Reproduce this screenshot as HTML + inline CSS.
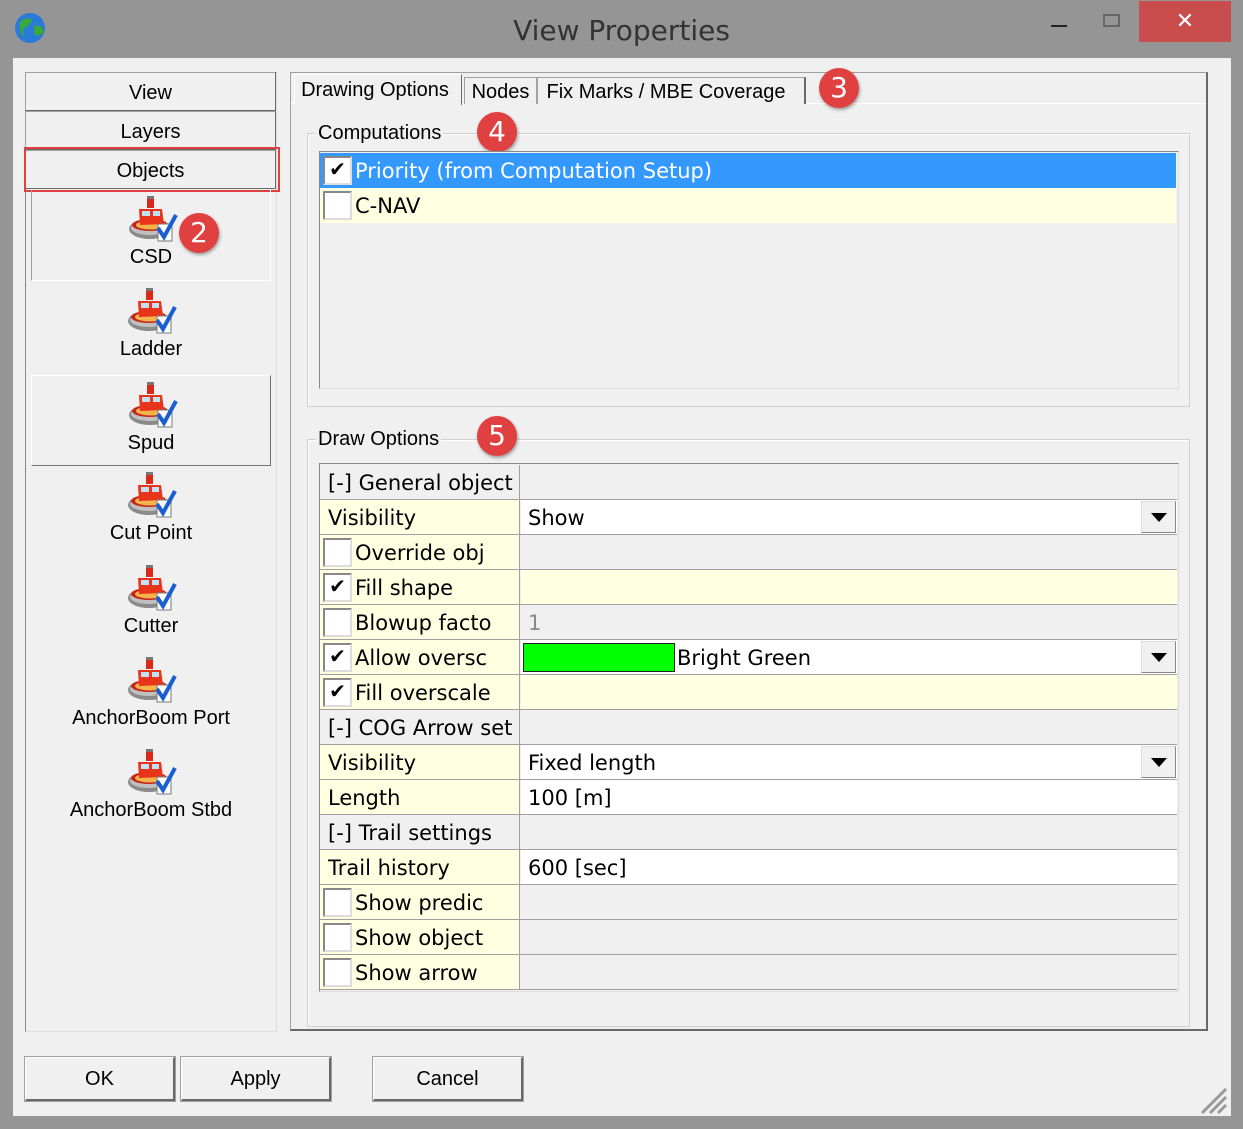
<!DOCTYPE html>
<html><head><meta charset="utf-8"><style>
*{margin:0;padding:0;box-sizing:border-box}
body{width:1243px;height:1129px;background:#959595;position:relative;overflow:hidden;font-family:"Liberation Sans",sans-serif;color:#000}
.a{position:absolute}
.client{left:13px;top:58px;width:1218px;height:1058px;background:#f0f0f0}
.badge{position:absolute;width:40px;height:40px;border-radius:50%;background:#e04040;color:#fff;font-size:28px;text-align:center;line-height:40px;box-shadow:1px 2px 3px rgba(0,0,0,.35);font-family:"DejaVu Sans",sans-serif}
.nbtn{position:absolute;left:25px;width:251px;height:39px;border:1px solid #a0a0a0;border-bottom-color:#696969;border-right-color:#696969;background:#f0f0f0;text-align:center;font-size:20px;line-height:40px}
.item{position:absolute;left:31px;width:240px;height:91px;text-align:center;font-size:20px}
.item svg{position:absolute;left:96px;top:5px}
.item span{position:absolute;left:0;right:0;top:56px}
.grp{position:absolute;border:1px solid #d0d0d0;box-shadow:inset 1px 1px 0 #fff}
.glab{position:absolute;background:#f0f0f0;font-size:20px;padding:0 2px}
.g{font-family:"DejaVu Sans",sans-serif;font-size:21px}
.row{position:absolute;left:320px;width:857px;height:35px;border-bottom:1px solid #a0a0a0}
.row .l{position:absolute;left:0;top:0;width:200px;height:34px;border-right:1px solid #a0a0a0;padding-left:8px;line-height:37px;white-space:nowrap;overflow:hidden}
.row .v{position:absolute;left:201px;top:0;right:0;height:34px;padding-left:7px;line-height:37px;white-space:nowrap}
.y{background:#ffffe1}.w{background:#fff}.gr{background:#f0f0f0}
.cb{position:absolute;left:3px;top:3px;width:29px;height:29px;background:#fff;border:2px solid #888;border-right-color:#ddd;border-bottom-color:#ddd;text-align:center;font-size:20px;line-height:22px}
.cbl{padding-left:35px!important}
.dd{position:absolute;right:1px;top:1px;width:35px;height:32px;background:#f0f0f0;border:1px solid #ddd;border-right-color:#888;border-bottom-color:#888}
.dd:after{content:"";position:absolute;left:9px;top:11px;border-left:8px solid transparent;border-right:8px solid transparent;border-top:9px solid #000}
.btn{position:absolute;top:1057px;width:150px;height:44px;border:1px solid #fff;border-right:2px solid #696969;border-bottom:2px solid #696969;outline:1px solid #a0a0a0;background:#f0f0f0;text-align:center;font-size:20px;line-height:42px}
.tab{position:absolute;font-size:20px;border:1px solid #a0a0a0;border-bottom:none;background:#f0f0f0;text-align:center}
</style></head><body>
<svg width="0" height="0" style="position:absolute"><defs>
<g id="boat">
<ellipse cx="22" cy="34" rx="21" ry="10" fill="#8a8a8a"/>
<ellipse cx="22" cy="33" rx="19" ry="7" fill="#c0c0c0"/>
<ellipse cx="22" cy="30" rx="18" ry="6" fill="#c8231a"/>
<ellipse cx="23" cy="30" rx="15" ry="4.5" fill="#f2b54a"/>
<rect x="19" y="1" width="7" height="12" fill="#d82a18"/>
<rect x="19" y="1" width="7" height="3" fill="#777"/>
<path d="M11 14 L34 14 L36 29 L12 30 Z" fill="#e8341a"/>
<rect x="14" y="16" width="8" height="5" fill="#bfe3f5"/>
<rect x="25" y="16" width="7" height="5" fill="#bfe3f5"/>
<rect x="30" y="29" width="14" height="17" fill="#fff" stroke="#777"/>
<path d="M30 33 L36 42 L48 20" fill="none" stroke="#1a5fd0" stroke-width="4"/>
</g></defs></svg>

<svg class="a" style="left:14px;top:12px" width="34" height="34"><circle cx="16" cy="16" r="15" fill="#2a7ad8"/><path d="M6 10 Q12 4 18 8 Q16 14 10 16 Q8 22 12 26 Q5 22 6 10Z M20 14 Q28 12 30 20 Q24 26 20 22Z" fill="#3aa83a"/></svg>
<div class="a" style="left:0;width:1243px;top:14px;text-align:center;font-size:28px;color:#333;font-family:'DejaVu Sans',sans-serif;">View Properties</div>
<div class="a" style="left:1051px;top:25px;width:16px;height:2px;background:#222"></div>
<div class="a" style="left:1103px;top:14px;width:17px;height:13px;border:2px solid #666"></div>
<div class="a" style="left:1139px;top:1px;width:92px;height:41px;background:#c94d4d;color:#fff;text-align:center;font-size:22px;line-height:40px">✕</div>

<div class="a client"></div>

<div class="a" style="left:25px;top:72px;width:252px;height:960px;border:1px solid #888;border-right-color:#ddd;border-bottom-color:#ddd"></div>
<div class="nbtn" style="top:72px">View</div>
<div class="nbtn" style="top:111px">Layers</div>
<div class="nbtn" style="top:150px">Objects</div>
<div class="a" style="left:24px;top:147px;width:256px;height:45px;border:2px solid #e04040"></div>
<div class="item" style="top:190px;border:1px solid #fff;border-left-color:#a0a0a0;border-top:none"><svg width="50" height="48"><use href="#boat"/></svg><span>CSD</span></div>
<div class="item" style="top:282px"><svg width="50" height="48"><use href="#boat"/></svg><span>Ladder</span></div>
<div class="item" style="top:375px;border:1px solid #fff;border-right-color:#777;border-bottom-color:#777"><svg width="50" height="48"><use href="#boat"/></svg><span>Spud</span></div>
<div class="item" style="top:466px"><svg width="50" height="48"><use href="#boat"/></svg><span>Cut Point</span></div>
<div class="item" style="top:559px"><svg width="50" height="48"><use href="#boat"/></svg><span>Cutter</span></div>
<div class="item" style="top:651px"><svg width="50" height="48"><use href="#boat"/></svg><span>AnchorBoom Port</span></div>
<div class="item" style="top:743px"><svg width="50" height="48"><use href="#boat"/></svg><span>AnchorBoom Stbd</span></div>
<div class="badge" style="left:179px;top:213px">2</div>

<div class="a" style="left:290px;top:72px;width:918px;height:959px;border:1px solid #a0a0a0;border-right:2px solid #696969;border-bottom:2px solid #696969"></div>
<div class="a" style="left:291px;top:103px;width:915px;height:926px;border-top:1px solid #fff"></div>
<div class="tab" style="left:294px;top:74px;width:168px;height:31px;line-height:30px;border-color:#fff;border-right-color:#696969;z-index:2;padding-right:6px">Drawing Options</div>
<div class="tab" style="left:464px;top:77px;width:73px;height:27px;line-height:28px">Nodes</div>
<div class="tab" style="left:537px;top:77px;width:269px;height:27px;line-height:28px;border-right:2px solid #696969;padding-right:10px">Fix Marks / MBE Coverage</div>
<div class="badge" style="left:819px;top:68px">3</div>

<div class="grp" style="left:307px;top:133px;width:883px;height:274px"></div>
<div class="glab" style="left:316px;top:122px">Computations</div>
<div class="badge" style="left:477px;top:112px">4</div>
<div class="a" style="left:319px;top:151px;width:860px;height:238px;border:1px solid #888;border-right-color:#ddd;border-bottom-color:#ddd;background:#f0f0f0"></div>
<div class="row g" style="top:153px;background:#3399ff;color:#fff;border:none;width:856px"><div class="cb" style="color:#000">✔</div><div class="v" style="left:0;padding-left:35px">Priority (from Computation Setup)</div></div>
<div class="row g y" style="top:188px;border:none;width:856px"><div class="cb"></div><div class="v" style="left:0;padding-left:35px">C-NAV</div></div>

<div class="grp" style="left:307px;top:439px;width:883px;height:588px"></div>
<div class="glab" style="left:316px;top:428px">Draw Options</div>
<div class="badge" style="left:477px;top:416px">5</div>
<div class="a" style="left:319px;top:463px;width:860px;height:529px;border:1px solid #888;border-right-color:#ddd;border-bottom-color:#ddd;background:#f0f0f0"></div>

<div class="g">
<div class="row" style="top:465px"><div class="l gr">[-] General object</div><div class="v gr"></div></div>
<div class="row" style="top:500px"><div class="l y">Visibility</div><div class="v w">Show<div class="dd"></div></div></div>
<div class="row" style="top:535px"><div class="l y cbl"><div class="cb"></div>Override obj</div><div class="v gr"></div></div>
<div class="row" style="top:570px"><div class="l y cbl"><div class="cb">✔</div>Fill shape</div><div class="v y"></div></div>
<div class="row" style="top:605px"><div class="l y cbl"><div class="cb"></div>Blowup facto</div><div class="v gr" style="color:#888">1</div></div>
<div class="row" style="top:640px"><div class="l y cbl"><div class="cb">✔</div>Allow oversc</div><div class="v w" style="padding-left:156px"><div class="a" style="left:2px;top:3px;width:152px;height:29px;background:#00ff00;border:1px solid #222"></div>Bright Green<div class="dd"></div></div></div>
<div class="row" style="top:675px"><div class="l y cbl"><div class="cb">✔</div>Fill overscale</div><div class="v y"></div></div>
<div class="row" style="top:710px"><div class="l gr">[-] COG Arrow set</div><div class="v gr"></div></div>
<div class="row" style="top:745px"><div class="l y">Visibility</div><div class="v w">Fixed length<div class="dd"></div></div></div>
<div class="row" style="top:780px"><div class="l y">Length</div><div class="v w">100 [m]</div></div>
<div class="row" style="top:815px"><div class="l gr">[-] Trail settings</div><div class="v gr"></div></div>
<div class="row" style="top:850px"><div class="l y">Trail history</div><div class="v w">600 [sec]</div></div>
<div class="row" style="top:885px"><div class="l y cbl"><div class="cb"></div>Show predic</div><div class="v gr"></div></div>
<div class="row" style="top:920px"><div class="l y cbl"><div class="cb"></div>Show object</div><div class="v gr"></div></div>
<div class="row" style="top:955px"><div class="l y cbl"><div class="cb"></div>Show arrow</div><div class="v gr"></div></div>
</div>

<div class="btn" style="left:25px">OK</div>
<div class="btn" style="left:181px">Apply</div>
<div class="btn" style="left:373px">Cancel</div>

<svg class="a" style="left:1200px;top:1088px" width="30" height="26"><path d="M2 25 L26 1 M10 25 L26 9 M18 25 L26 17" stroke="#999" stroke-width="3"/></svg>
</body></html>
